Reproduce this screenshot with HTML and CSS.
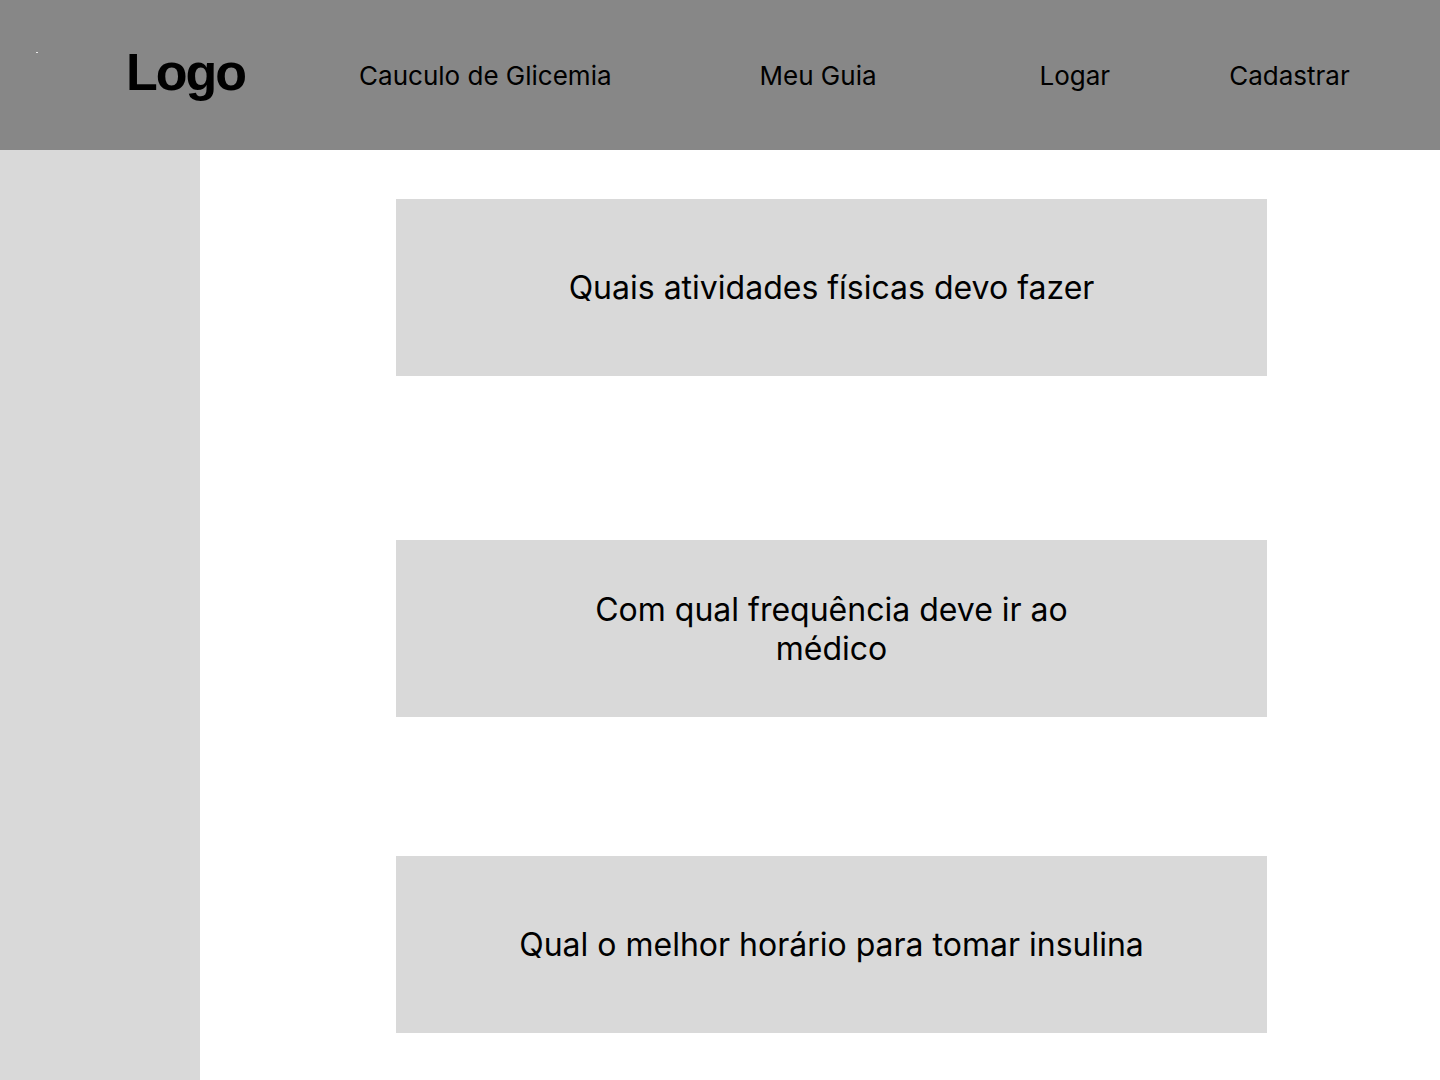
FILE: index.html
```html
<!DOCTYPE html>
<html lang="pt-BR">
<head>
<meta charset="utf-8">
<title>Meu Guia</title>
<link rel="stylesheet" href="styles.css">
</head>
<body>
<header class="topbar">
  <span class="dot"></span>
  <div class="logo">Logo</div>
  <nav class="nav">
    <a class="nav-item nav-calc" href="#">Cauculo de Glicemia</a>
    <a class="nav-item nav-guia" href="#">Meu Guia</a>
    <a class="nav-item nav-logar" href="#">Logar</a>
    <a class="nav-item nav-cad" href="#">Cadastrar</a>
  </nav>
</header>
<div class="layout">
  <aside class="sidebar"></aside>
  <main class="content">
    <section class="card card-1"><p class="card-text">Quais atividades físicas devo fazer</p></section>
    <section class="card card-2"><p class="card-text narrow">Com qual frequência deve ir ao médico</p></section>
    <section class="card card-3"><p class="card-text">Qual o melhor horário para tomar insulina</p></section>
  </main>
</div>
</body>
</html>
```

FILE: styles.css
```css
* { box-sizing: border-box; }
html, body { margin: 0; padding: 0; }
body {
  font-family: Inter, "Noto Sans", sans-serif;
  color: #000;
  background: #fff;
  width: 1440px;
  height: 1080px;
  overflow: hidden;
}
.topbar {
  height: 150px;
  background: #878787;
  display: flex;
  align-items: center;
  padding-left: 126px;
  position: relative;
}
.dot {
  position: absolute;
  left: 36px;
  top: 52px;
  width: 2px;
  height: 1px;
  background: #e8e8e8;
}
.logo {
  font-family: "Liberation Sans", Arial, sans-serif;
  font-weight: 700;
  font-size: 52px;
  letter-spacing: -2px;
  line-height: 1;
  margin-top: -6px;
}
.nav { display: flex; align-items: center; }
.nav-item {
  color: #000;
  text-decoration: none;
  font-size: 26px;
  line-height: 1;
  margin-top: 2px;
}
.nav-calc { margin-left: 114px; }
.nav-guia { margin-left: 148px; }
.nav-logar { margin-left: 163px; }
.nav-cad { margin-left: 119px; }
.layout {
  display: flex;
  height: 930px;
}
.sidebar {
  width: 200px;
  background: #d9d9d9;
  flex: none;
}
.content {
  flex: 1;
  padding-left: 196px;
  padding-top: 49px;
  display: flex;
  flex-direction: column;
}
.card {
  width: 871px;
  height: 177px;
  background: #d9d9d9;
  display: flex;
  align-items: center;
  justify-content: center;
}
.card-2 { margin-top: 164px; }
.card-3 { margin-top: 139px; }
.card-text {
  margin: 0;
  font-size: 32px;
  line-height: 39px;
  text-align: center;
}
.card-text.narrow { max-width: 500px; }
```
